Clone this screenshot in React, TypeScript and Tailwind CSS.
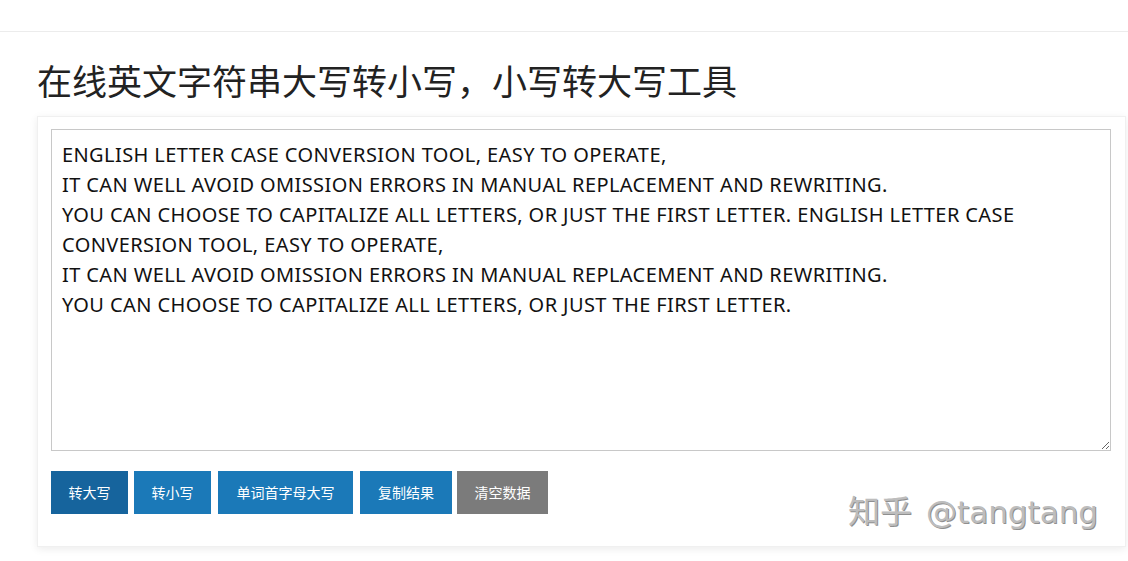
const TEXT = `ENGLISH LETTER CASE CONVERSION TOOL, EASY TO OPERATE,
IT CAN WELL AVOID OMISSION ERRORS IN MANUAL REPLACEMENT AND REWRITING.
YOU CAN CHOOSE TO CAPITALIZE ALL LETTERS, OR JUST THE FIRST LETTER. ENGLISH LETTER CASE
CONVERSION TOOL, EASY TO OPERATE,
IT CAN WELL AVOID OMISSION ERRORS IN MANUAL REPLACEMENT AND REWRITING.
YOU CAN CHOOSE TO CAPITALIZE ALL LETTERS, OR JUST THE FIRST LETTER.`;

const buttons = [
  { label: '转大写', cls: 'w-[77px] bg-[#16649d]' },
  { label: '转小写', cls: 'ml-[6px] w-[77px] bg-[#1b79b8]' },
  { label: '单词首字母大写', cls: 'ml-[7px] w-[135px] bg-[#1b79b8]' },
  { label: '复制结果', cls: 'ml-[7px] w-[92px] bg-[#1b79b8]' },
  { label: '清空数据', cls: 'ml-[5px] w-[91px] bg-[#7b7b7b]' },
];

export default function App() {
  return (
    <div className="relative h-[561px] w-[1128px] overflow-hidden bg-white font-['Noto_Sans','Noto_Sans_CJK_SC',sans-serif]">
      <div className="h-[32px] border-b border-[#ececec]" />
      <h1 className="ml-[37px] mt-[27px] text-[35px] leading-[42px] text-[#222] font-['Noto_Sans_CJK_SC','Noto_Sans',sans-serif]">
        在线英文字符串大写转小写，小写转大写工具
      </h1>
      <div className="ml-[37px] mt-[15px] w-[1089px] border border-[#f0f0f0] bg-white px-[13px] pb-[32px] pt-[12px] shadow-[0_2px_8px_rgba(0,0,0,0.08)]">
        <textarea
          readOnly
          wrap="off"
          defaultValue={TEXT}
          className="block h-[322px] w-[1060px] resize overflow-hidden border border-[#c8c8c8] px-[10px] py-[10px] text-[20px] leading-[30px] tracking-[0.4px] text-[#111] outline-none font-['Noto_Sans',sans-serif]"
        />
        <div className="mt-[20px] flex">
          {buttons.map((b) => (
            <button
              key={b.label}
              className={`h-[43px] text-[14px] text-white font-['Noto_Sans_CJK_SC',sans-serif] ${b.cls}`}
            >
              {b.label}
            </button>
          ))}
        </div>
      </div>
      <div className="absolute left-[848px] top-[489px] flex items-baseline text-[#bdbdbd] [text-shadow:1px_1px_0_#8f8f8f]">
        <span className="text-[32px] leading-[40px] font-['Noto_Sans_CJK_SC',sans-serif]">知乎</span>
        <span className="ml-[14px] text-[31px] leading-[40px] font-['DejaVu_Sans',sans-serif]">@tangtang</span>
      </div>
    </div>
  );
}
